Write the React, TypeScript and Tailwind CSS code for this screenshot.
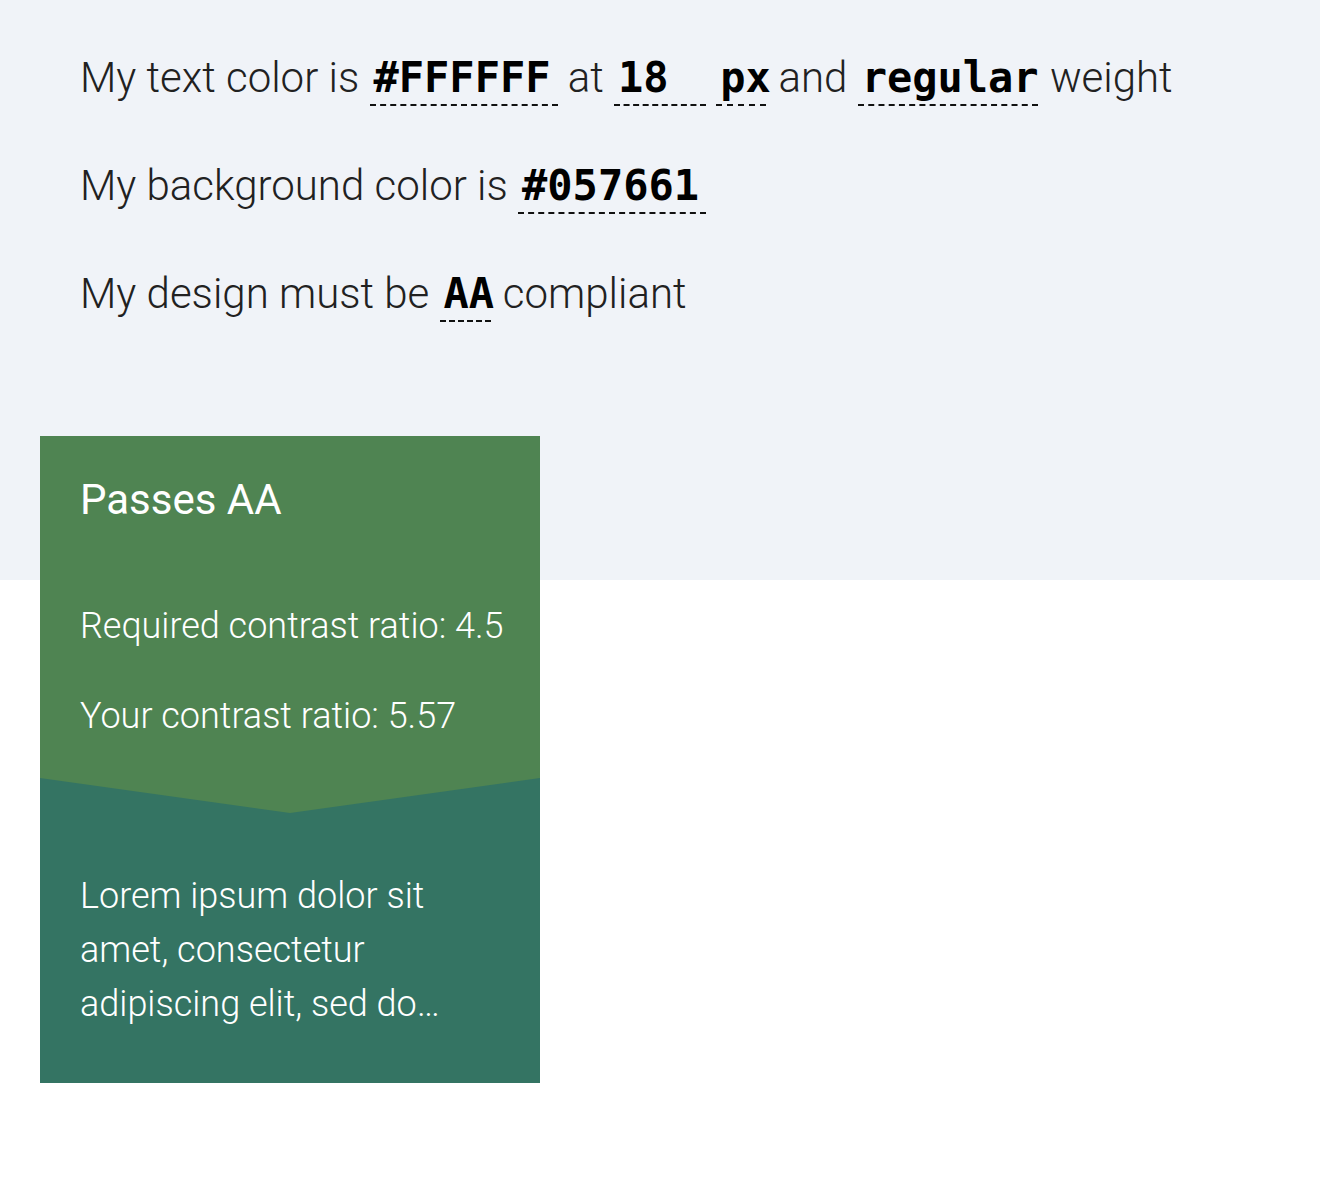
const mono = "inline-block border-b-2 border-dashed border-[#111] px-1 pb-[5px] font-['DejaVu_Sans_Mono',monospace] font-bold text-[42px] leading-none text-black";

function Field({ value, width }: { value: string; width: string }) {
  return <span className={`${mono} ${width}`}>{value}</span>;
}

export default function App() {
  return (
    <div className="min-h-[1180px] bg-[linear-gradient(to_bottom,#f0f3f8_580px,#ffffff_580px)] font-['Roboto',sans-serif]">
      {/* Settings */}
      <div className="flex flex-col gap-12 px-20 pt-12 text-[42px] font-light leading-[60px] text-[#212121]">
        <p>
          My text color is <Field value="#FFFFFF" width="w-[188px]" /> at{" "}
          <Field value="18" width="w-[92px]" /> <Field value="px" width="w-[50px]" />{" "}
          <span className="ml-[2px]">and</span> <Field value="regular" width="w-[180px]" />{" "}
          <span className="ml-[2px]">weight</span>
        </p>
        <p>
          My background color is <Field value="#057661" width="w-[188px]" />
        </p>
        <p>
          My design must be <Field value="AA" width="w-[51px]" />{" "}
          <span className="ml-[2px]">compliant</span>
        </p>
      </div>

      {/* Result card */}
      <div className="ml-10 mt-[112px] w-[500px] bg-[#347463] text-white">
        <div className="bg-[#4f8452] pb-[77px] pl-10 pr-6 pt-10 [clip-path:polygon(0_0,100%_0,100%_calc(100%-35px),50%_100%,0_calc(100%-35px))]">
          <h2 className="text-[42px] leading-[48px]">Passes AA</h2>
          <p className="mt-[82px] whitespace-nowrap text-[36px] font-light leading-[40px]">Required contrast ratio: 4.5</p>
          <p className="mt-[50px] whitespace-nowrap text-[36px] font-light leading-[40px]">Your contrast ratio: 5.57</p>
        </div>
        <p className="px-10 pb-[52px] pt-14 text-[36px] font-light leading-[54px]">
          Lorem ipsum dolor sit amet, consectetur adipiscing elit, sed do…
        </p>
      </div>
    </div>
  );
}
